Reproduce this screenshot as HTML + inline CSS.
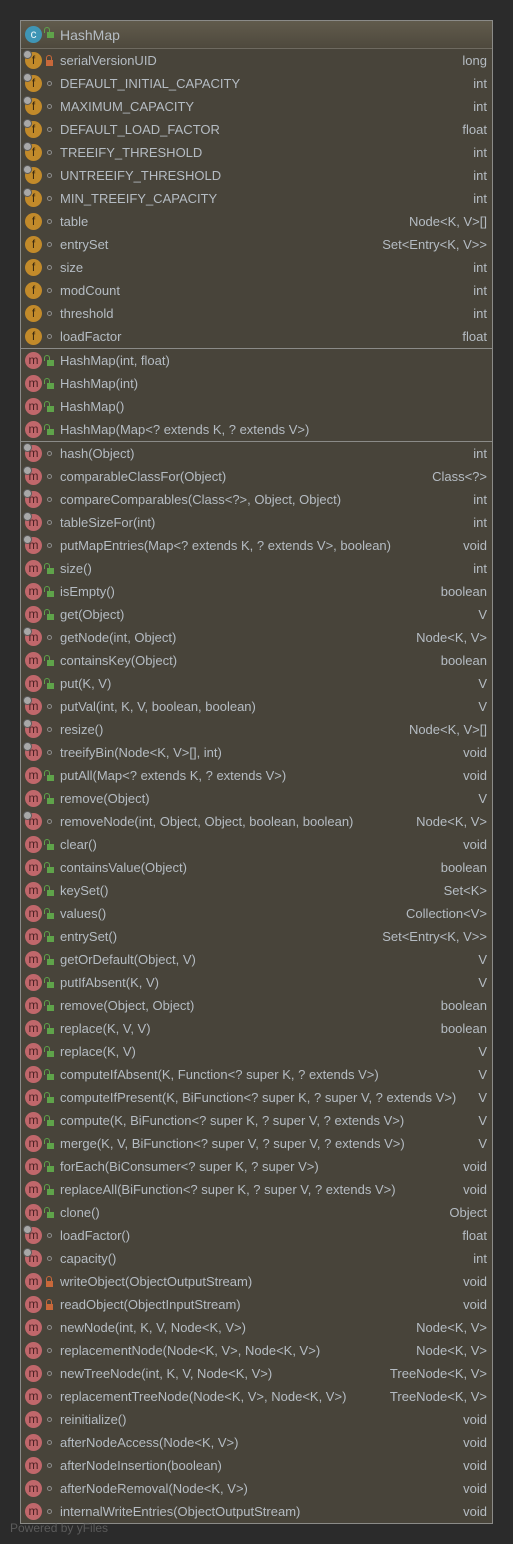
<!DOCTYPE html>
<html><head><meta charset="utf-8"><style>
*{margin:0;padding:0;box-sizing:border-box}
body{width:513px;height:1544px;background:#2b2b2b;font-family:"Liberation Sans",sans-serif;font-size:13px;color:#b5bcc3;position:relative;overflow:hidden}
.box{position:absolute;left:20px;top:20px;width:473px;height:1504px;border:1px solid #8b8b88;background:#48443a}
.hd{height:28px;background:linear-gradient(#615b4c,#4e493d);border-bottom:1px solid #6e6a60;position:relative}
.hd span{position:absolute;left:39px;top:6px;font-size:14px}
.sec{border-bottom:1px solid #8b8b88}
.r{height:23px;position:relative;white-space:nowrap}
.r span{position:absolute;left:39px;top:4px}
.r em{position:absolute;right:5px;top:4px;font-style:normal}
.i{position:absolute;left:4px;top:3px;width:17px;height:17px;border-radius:50%;font-style:normal;font-size:12px;line-height:16px;text-align:center;color:#3b2a10}
.f{background:#c28a2a}
.m{background:#c0676b;color:#4a1f22}
.c{background:#3f95b5;color:#e8f3f8}
.s::before{content:"";position:absolute;left:-2px;top:-2px;width:7px;height:7px;border-radius:50%;background:#a8a8a8;border:1px solid #5a5a5a}
.v{position:absolute;left:25px;top:9px}
.p{width:5px;height:5px;border:1px solid #8e8e8e;border-radius:50%;left:26px}
.g{width:7px;height:6px;background:#5fa34a;top:11px;left:26px}
.g::before{content:"";position:absolute;left:-3px;top:-5px;width:4px;height:5px;border:1.5px solid #5fa34a;border-bottom:none;border-radius:3px 3px 0 0}
.x{width:7px;height:6px;background:#c8683a;top:11px;left:25px}
.x::before{content:"";position:absolute;left:0px;top:-5px;width:4px;height:5px;border:1.5px solid #c8683a;border-bottom:none;border-radius:3px 3px 0 0}
.pw{position:absolute;left:10px;top:1521px;color:#5b5b5b;font-size:12px}
</style></head><body>
<div class="box">
<div class="hd"><i class="i c" style="top:5px">c</i><b class="v g" style="top:11px"></b><span>HashMap</span></div>
<div class="sec">
<div class="r"><i class="i f s">f</i><b class="v x"></b><span>serialVersionUID</span><em>long</em></div>
<div class="r"><i class="i f s">f</i><b class="v p"></b><span>DEFAULT_INITIAL_CAPACITY</span><em>int</em></div>
<div class="r"><i class="i f s">f</i><b class="v p"></b><span>MAXIMUM_CAPACITY</span><em>int</em></div>
<div class="r"><i class="i f s">f</i><b class="v p"></b><span>DEFAULT_LOAD_FACTOR</span><em>float</em></div>
<div class="r"><i class="i f s">f</i><b class="v p"></b><span>TREEIFY_THRESHOLD</span><em>int</em></div>
<div class="r"><i class="i f s">f</i><b class="v p"></b><span>UNTREEIFY_THRESHOLD</span><em>int</em></div>
<div class="r"><i class="i f s">f</i><b class="v p"></b><span>MIN_TREEIFY_CAPACITY</span><em>int</em></div>
<div class="r"><i class="i f">f</i><b class="v p"></b><span>table</span><em>Node&lt;K, V&gt;[]</em></div>
<div class="r"><i class="i f">f</i><b class="v p"></b><span>entrySet</span><em>Set&lt;Entry&lt;K, V&gt;&gt;</em></div>
<div class="r"><i class="i f">f</i><b class="v p"></b><span>size</span><em>int</em></div>
<div class="r"><i class="i f">f</i><b class="v p"></b><span>modCount</span><em>int</em></div>
<div class="r"><i class="i f">f</i><b class="v p"></b><span>threshold</span><em>int</em></div>
<div class="r"><i class="i f">f</i><b class="v p"></b><span>loadFactor</span><em>float</em></div>
</div>
<div class="sec">
<div class="r"><i class="i m">m</i><b class="v g"></b><span>HashMap(int, float)</span></div>
<div class="r"><i class="i m">m</i><b class="v g"></b><span>HashMap(int)</span></div>
<div class="r"><i class="i m">m</i><b class="v g"></b><span>HashMap()</span></div>
<div class="r"><i class="i m">m</i><b class="v g"></b><span>HashMap(Map&lt;? extends K, ? extends V&gt;)</span></div>
</div>
<div>
<div class="r"><i class="i m s">m</i><b class="v p"></b><span>hash(Object)</span><em>int</em></div>
<div class="r"><i class="i m s">m</i><b class="v p"></b><span>comparableClassFor(Object)</span><em>Class&lt;?&gt;</em></div>
<div class="r"><i class="i m s">m</i><b class="v p"></b><span>compareComparables(Class&lt;?&gt;, Object, Object)</span><em>int</em></div>
<div class="r"><i class="i m s">m</i><b class="v p"></b><span>tableSizeFor(int)</span><em>int</em></div>
<div class="r"><i class="i m s">m</i><b class="v p"></b><span>putMapEntries(Map&lt;? extends K, ? extends V&gt;, boolean)</span><em>void</em></div>
<div class="r"><i class="i m">m</i><b class="v g"></b><span>size()</span><em>int</em></div>
<div class="r"><i class="i m">m</i><b class="v g"></b><span>isEmpty()</span><em>boolean</em></div>
<div class="r"><i class="i m">m</i><b class="v g"></b><span>get(Object)</span><em>V</em></div>
<div class="r"><i class="i m s">m</i><b class="v p"></b><span>getNode(int, Object)</span><em>Node&lt;K, V&gt;</em></div>
<div class="r"><i class="i m">m</i><b class="v g"></b><span>containsKey(Object)</span><em>boolean</em></div>
<div class="r"><i class="i m">m</i><b class="v g"></b><span>put(K, V)</span><em>V</em></div>
<div class="r"><i class="i m s">m</i><b class="v p"></b><span>putVal(int, K, V, boolean, boolean)</span><em>V</em></div>
<div class="r"><i class="i m s">m</i><b class="v p"></b><span>resize()</span><em>Node&lt;K, V&gt;[]</em></div>
<div class="r"><i class="i m s">m</i><b class="v p"></b><span>treeifyBin(Node&lt;K, V&gt;[], int)</span><em>void</em></div>
<div class="r"><i class="i m">m</i><b class="v g"></b><span>putAll(Map&lt;? extends K, ? extends V&gt;)</span><em>void</em></div>
<div class="r"><i class="i m">m</i><b class="v g"></b><span>remove(Object)</span><em>V</em></div>
<div class="r"><i class="i m s">m</i><b class="v p"></b><span>removeNode(int, Object, Object, boolean, boolean)</span><em>Node&lt;K, V&gt;</em></div>
<div class="r"><i class="i m">m</i><b class="v g"></b><span>clear()</span><em>void</em></div>
<div class="r"><i class="i m">m</i><b class="v g"></b><span>containsValue(Object)</span><em>boolean</em></div>
<div class="r"><i class="i m">m</i><b class="v g"></b><span>keySet()</span><em>Set&lt;K&gt;</em></div>
<div class="r"><i class="i m">m</i><b class="v g"></b><span>values()</span><em>Collection&lt;V&gt;</em></div>
<div class="r"><i class="i m">m</i><b class="v g"></b><span>entrySet()</span><em>Set&lt;Entry&lt;K, V&gt;&gt;</em></div>
<div class="r"><i class="i m">m</i><b class="v g"></b><span>getOrDefault(Object, V)</span><em>V</em></div>
<div class="r"><i class="i m">m</i><b class="v g"></b><span>putIfAbsent(K, V)</span><em>V</em></div>
<div class="r"><i class="i m">m</i><b class="v g"></b><span>remove(Object, Object)</span><em>boolean</em></div>
<div class="r"><i class="i m">m</i><b class="v g"></b><span>replace(K, V, V)</span><em>boolean</em></div>
<div class="r"><i class="i m">m</i><b class="v g"></b><span>replace(K, V)</span><em>V</em></div>
<div class="r"><i class="i m">m</i><b class="v g"></b><span>computeIfAbsent(K, Function&lt;? super K, ? extends V&gt;)</span><em>V</em></div>
<div class="r"><i class="i m">m</i><b class="v g"></b><span>computeIfPresent(K, BiFunction&lt;? super K, ? super V, ? extends V&gt;)</span><em>V</em></div>
<div class="r"><i class="i m">m</i><b class="v g"></b><span>compute(K, BiFunction&lt;? super K, ? super V, ? extends V&gt;)</span><em>V</em></div>
<div class="r"><i class="i m">m</i><b class="v g"></b><span>merge(K, V, BiFunction&lt;? super V, ? super V, ? extends V&gt;)</span><em>V</em></div>
<div class="r"><i class="i m">m</i><b class="v g"></b><span>forEach(BiConsumer&lt;? super K, ? super V&gt;)</span><em>void</em></div>
<div class="r"><i class="i m">m</i><b class="v g"></b><span>replaceAll(BiFunction&lt;? super K, ? super V, ? extends V&gt;)</span><em>void</em></div>
<div class="r"><i class="i m">m</i><b class="v g"></b><span>clone()</span><em>Object</em></div>
<div class="r"><i class="i m s">m</i><b class="v p"></b><span>loadFactor()</span><em>float</em></div>
<div class="r"><i class="i m s">m</i><b class="v p"></b><span>capacity()</span><em>int</em></div>
<div class="r"><i class="i m">m</i><b class="v x"></b><span>writeObject(ObjectOutputStream)</span><em>void</em></div>
<div class="r"><i class="i m">m</i><b class="v x"></b><span>readObject(ObjectInputStream)</span><em>void</em></div>
<div class="r"><i class="i m">m</i><b class="v p"></b><span>newNode(int, K, V, Node&lt;K, V&gt;)</span><em>Node&lt;K, V&gt;</em></div>
<div class="r"><i class="i m">m</i><b class="v p"></b><span>replacementNode(Node&lt;K, V&gt;, Node&lt;K, V&gt;)</span><em>Node&lt;K, V&gt;</em></div>
<div class="r"><i class="i m">m</i><b class="v p"></b><span>newTreeNode(int, K, V, Node&lt;K, V&gt;)</span><em>TreeNode&lt;K, V&gt;</em></div>
<div class="r"><i class="i m">m</i><b class="v p"></b><span>replacementTreeNode(Node&lt;K, V&gt;, Node&lt;K, V&gt;)</span><em>TreeNode&lt;K, V&gt;</em></div>
<div class="r"><i class="i m">m</i><b class="v p"></b><span>reinitialize()</span><em>void</em></div>
<div class="r"><i class="i m">m</i><b class="v p"></b><span>afterNodeAccess(Node&lt;K, V&gt;)</span><em>void</em></div>
<div class="r"><i class="i m">m</i><b class="v p"></b><span>afterNodeInsertion(boolean)</span><em>void</em></div>
<div class="r"><i class="i m">m</i><b class="v p"></b><span>afterNodeRemoval(Node&lt;K, V&gt;)</span><em>void</em></div>
<div class="r"><i class="i m">m</i><b class="v p"></b><span>internalWriteEntries(ObjectOutputStream)</span><em>void</em></div>
</div>
</div>
<div class="pw">Powered by yFiles</div>
</body></html>
